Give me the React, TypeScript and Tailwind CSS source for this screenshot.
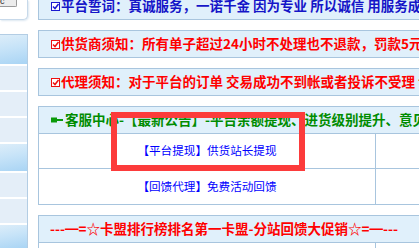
import React from 'react';

const font = "font-['SimSun','Noto_Sans_CJK_SC',sans-serif]";

function CheckIcon({ color }: { color: string }) {
  return (
    <svg width="9" height="9" viewBox="0 0 9 9" className="shrink-0">
      <rect x="0.5" y="0.5" width="8" height="8" fill="#ffffff" stroke={color} />
      <path d="M2 4.5 L4 6.5 L7.5 2" fill="none" stroke={color} strokeWidth="1.5" />
    </svg>
  );
}

function DashIcon() {
  return (
    <svg width="12" height="6" viewBox="0 0 12 6" className="shrink-0">
      <rect x="0" y="0.5" width="6" height="5" fill="#0a9a0a" />
      <rect x="5" y="2" width="7" height="2" fill="#0a9a0a" />
    </svg>
  );
}

function Notice({ icon, color, text }: { icon: string; color: string; text: string }) {
  return (
    <div className="flex h-[28px] shrink-0 items-center overflow-hidden border border-[#a8c5de] bg-[#e0f0fb] pl-[12px]">
      <CheckIcon color={icon} />
      <span className={`${font} ${color} ml-[1px] whitespace-nowrap text-[13.5px] font-bold leading-none`}>
        {text}
      </span>
    </div>
  );
}

function Row({ text, last }: { text: React.ReactNode; last?: boolean }) {
  return (
    <div className={`flex h-[35px] shrink-0 ${last ? '' : 'border-b border-[#a8c5de]'}`}>
      <div className="flex w-[337px] items-center justify-center border-r border-[#a8c5de] bg-white">
        <span className={`${font} whitespace-nowrap text-[11.6px] leading-none text-[#0000ff]`}>{text}</span>
      </div>
      <div className="flex-1 bg-white" />
    </div>
  );
}

export default function App() {
  return (
    <div className="relative flex h-[248px] w-[419px] items-start overflow-hidden bg-white">
      {/* sidebar */}
      <div className="flex h-[248px] w-[28px] shrink-0 flex-col">
        <div className="h-[20px] shrink-0 rounded-br-[5px] border-b border-r border-[#c7d9ea] bg-white shadow-[1px_1px_2px_#dde8f1]">
          <div className="flex h-[7px] w-[17px] items-end overflow-hidden rounded-br-[2px] border-b border-r border-[#9a9a9a] bg-[#ececec]">
            <span className="font-['Liberation_Sans',sans-serif] text-[9px] leading-[9px] text-[#222]">c</span>
          </div>
        </div>
        <div className="mt-[14px] flex flex-1 flex-col border-r border-t border-[#b3cde4]">
          <div className="h-[31px] shrink-0 border-b-2 border-white bg-[linear-gradient(170deg,#dcedf9_0%,#c6e3f8_45%,#a9d4f4_100%)]" />
          <div className="h-[26px] shrink-0 border-b-2 border-white bg-[#e4eef8]" />
          <div className="h-[26px] shrink-0 border-b-2 border-white bg-[#e4eef8]" />
          <div className="h-[26px] shrink-0 border-b-2 border-white bg-[#e4eef8]" />
          <div className="h-[29px] shrink-0 border-b-2 border-white bg-[linear-gradient(170deg,#dcedf9_0%,#c6e3f8_45%,#a9d4f4_100%)]" />
          <div className="h-[26px] shrink-0 border-b-2 border-white bg-[#e4eef8]" />
          <div className="h-[26px] shrink-0 border-b-2 border-white bg-[#e4eef8]" />
          <div className="flex-1 bg-[linear-gradient(170deg,#dcedf9_0%,#c6e3f8_45%,#a9d4f4_100%)]" />
        </div>
      </div>

      {/* main */}
      <div className="ml-[10px] mt-[-8px] flex w-[470px] shrink-0 flex-col gap-[10px]">
        <Notice
          icon="#1a1ad0"
          color="text-[#1515c8]"
          text="平台誓词：真诚服务，一诺千金 因为专业 所以诚信 用服务成绩未来"
        />
        <Notice
          icon="#ee1111"
          color="text-[#ff0000]"
          text="供货商须知：所有单子超过24小时不处理也不退款，罚款5元一单"
        />
        <Notice
          icon="#ee1111"
          color="text-[#ff0000]"
          text="代理须知：对于平台的订单 交易成功不到帐或者投诉不受理 请及时"
        />

        <div className="shrink-0 border border-[#a8c5de]">
          <div className="flex h-[27px] items-center overflow-hidden border-b border-[#a8c5de] bg-[#e0f0fb] pl-[12px]">
            <DashIcon />
            <span className={`${font} ml-[2px] whitespace-nowrap text-[13.5px] font-bold leading-none text-[#008c00]`}>
              客服中心-【最新公告】-平台余额提现、进货级别提升、意见提交
            </span>
          </div>
          <Row text="【平台提现】供货站长提现" />
          <Row text="【回馈代理】免费活动回馈" last />
        </div>

        <div className="shrink-0 border border-[#a8c5de]">
          <div className="flex h-[27px] items-center overflow-hidden border-b border-[#a8c5de] bg-[#e0f0fb] pl-[11px]">
            <span className={`${font} whitespace-nowrap text-[13.5px] font-bold leading-none text-[#ff0000]`}>
              ---━=☆卡盟排行榜排名第一卡盟-分站回馈大促销☆=━---
            </span>
          </div>
          <Row text="" />
        </div>
      </div>

      {/* annotation */}
      <div className="absolute left-[111px] top-[112px] h-[59px] w-[194px] border-[6px] border-[#fc3b3b]" />
    </div>
  );
}
